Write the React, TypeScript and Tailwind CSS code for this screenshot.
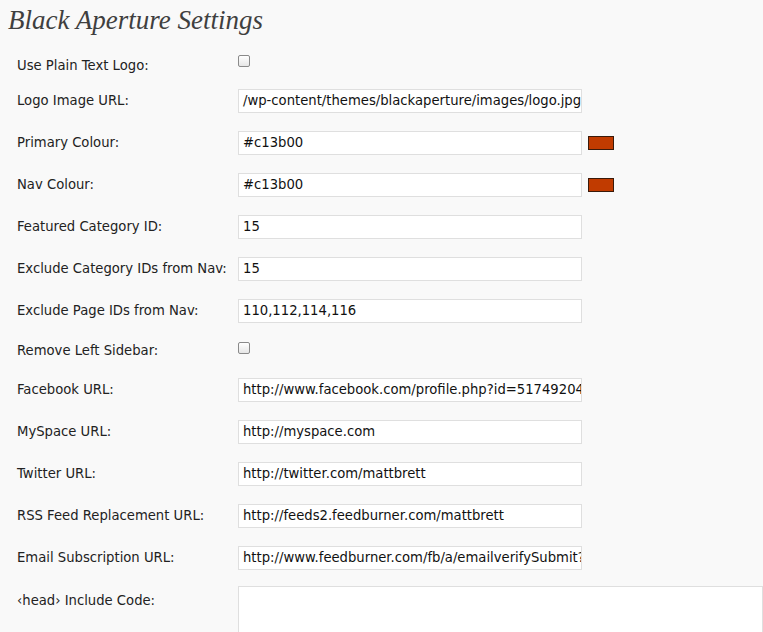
const rows: Array<{ label: string; kind: 'check' | 'text' | 'colour'; value?: string; first?: boolean }> = [
  { label: 'Use Plain Text Logo:', kind: 'check', first: true },
  { label: 'Logo Image URL:', kind: 'text', value: '/wp-content/themes/blackaperture/images/logo.jpg' },
  { label: 'Primary Colour:', kind: 'colour', value: '#c13b00' },
  { label: 'Nav Colour:', kind: 'colour', value: '#c13b00' },
  { label: 'Featured Category ID:', kind: 'text', value: '15' },
  { label: 'Exclude Category IDs from Nav:', kind: 'text', value: '15' },
  { label: 'Exclude Page IDs from Nav:', kind: 'text', value: '110,112,114,116' },
  { label: 'Remove Left Sidebar:', kind: 'check' },
  { label: 'Facebook URL:', kind: 'text', value: 'http://www.facebook.com/profile.php?id=51749204' },
  { label: 'MySpace URL:', kind: 'text', value: 'http://myspace.com' },
  { label: 'Twitter URL:', kind: 'text', value: 'http://twitter.com/mattbrett' },
  { label: 'RSS Feed Replacement URL:', kind: 'text', value: 'http://feeds2.feedburner.com/mattbrett' },
  { label: 'Email Subscription URL:', kind: 'text', value: 'http://www.feedburner.com/fb/a/emailverifySubmit?' },
];

function TextBox({ value }: { value: string }) {
  return (
    <div className="h-[24px] w-[344px] border border-[#dfdfdf] bg-white pl-[4px] leading-[22px] whitespace-nowrap overflow-hidden text-[#111]">
      {value}
    </div>
  );
}

function CheckBox({ first }: { first?: boolean }) {
  return (
    <span
      className={`${first ? 'mt-[12px]' : 'mt-[10px]'} block h-[12px] w-[12px] rounded-[2px] border border-[#8a8a8a] bg-gradient-to-b from-white to-[#e6e6e6]`}
    />
  );
}

export default function App() {
  return (
    <div
      className="h-[632px] w-[763px] overflow-hidden bg-[#f9f9f9] pl-[7px] text-[13.2px] text-[#222]"
      style={{ fontFamily: '"DejaVu Sans", "Lucida Grande", sans-serif' }}
    >
      <h2
        className="pt-[2px] pl-[1px] text-[27px] italic leading-[36px] text-[#3f3f3f]"
        style={{ fontFamily: '"Liberation Serif", Georgia, serif' }}
      >
        Black Aperture Settings
      </h2>
      <div className="mt-[5px] flex flex-col">
        {rows.map((r) =>
          r.kind === 'check' ? (
            <div key={r.label} className="flex h-[37px]">
              <div className={`w-[231px] pl-[10px] leading-[16px] ${r.first ? 'pt-[15px]' : 'pt-[11px]'}`}>{r.label}</div>
              <CheckBox first={r.first} />
            </div>
          ) : (
            <div key={r.label} className="flex h-[42px] items-center">
              <div className="w-[231px] pl-[10px]">{r.label}</div>
              <TextBox value={r.value!} />
              {r.kind === 'colour' && (
                <span className="ml-[6px] h-[14px] w-[26px] border border-[#3a1a0a] bg-[#c13b00]" />
              )}
            </div>
          )
        )}
        <div className="mt-[7px] flex">
          <div className="w-[231px] pl-[10px] pt-[5px]">‹head› Include Code:</div>
          <div className="h-[60px] flex-1 border border-[#dfdfdf] bg-white" />
        </div>
      </div>
    </div>
  );
}
